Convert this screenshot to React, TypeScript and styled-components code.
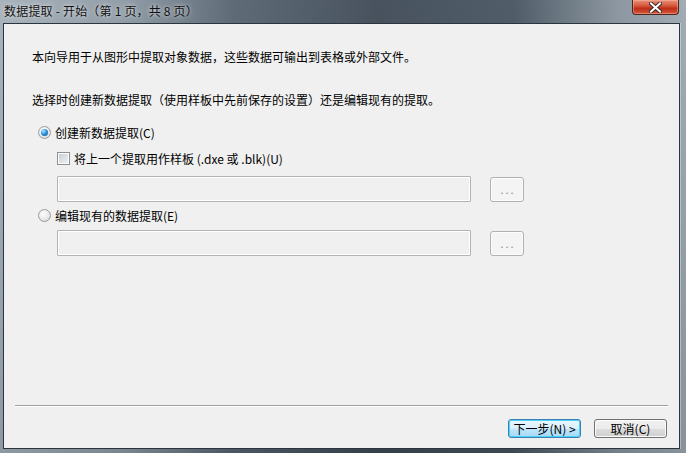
import React from "react";
import styled, { createGlobalStyle } from "styled-components";

const GlobalStyle = createGlobalStyle`
  html, body {
    margin: 0;
    padding: 0;
    background: #4c5a68;
  }
  body {
    font-family: "Noto Sans CJK SC", "Liberation Sans", sans-serif;
    font-size: 12px;
    color: #000;
  }
`;

// styled
const Window = styled.div`
  width: 686px;
  height: 453px;
  box-sizing: border-box;
  display: flex;
  flex-direction: column;
  padding: 0 6px 4px 3px;
  background:
    linear-gradient(to bottom, rgba(255, 255, 255, 0.06), rgba(0, 0, 0, 0.12)),
    linear-gradient(
      to right,
      #a3aeb7 0%,
      #8b98a3 18%,
      #55626f 34%,
      #3c4854 55%,
      #46535f 75%,
      #85919c 90%,
      #9ca7b0 100%
    );
`;

const TitleBar = styled.div`
  height: 23px;
  flex-shrink: 0;
  display: flex;
  align-items: flex-start;
  justify-content: space-between;
`;

const Title = styled.div`
  margin: 3px 0 0 1px;
  font-size: 12px;
  line-height: 16px;
  color: #111;
  text-shadow: 0 0 6px rgba(255, 255, 255, 0.6), 0 0 3px rgba(255, 255, 255, 0.5);
  letter-spacing: 0.2px;
`;

const CloseButton = styled.div`
  width: 47px;
  height: 15px;
  box-sizing: border-box;
  margin-right: 1px;
  border: 1px solid #4a2620;
  border-top: none;
  border-radius: 0 0 4px 4px;
  background: linear-gradient(to bottom, #e8927a 0%, #d65a3e 40%, #bd2f18 60%, #d4583a 100%);
  box-shadow: inset 0 0 0 1px rgba(255, 190, 170, 0.45);
  display: flex;
  align-items: center;
  justify-content: center;
`;

const Client = styled.div`
  flex: 1;
  display: flex;
  flex-direction: column;
  background: #f0f0f0;
  border: 1px solid #2a3540;
  box-shadow: 1px 0 0 rgba(255, 255, 255, 0.35);
`;

const Body = styled.div`
  display: flex;
  flex-direction: column;
  padding: 25px 0 0 28px;
`;

const Para = styled.p<{ $gap?: number }>`
  margin: ${(p) => p.$gap ?? 0}px 0 0 0;
  line-height: 16px;
  white-space: nowrap;
`;

const OptionRow = styled.label<{ $indent: number; $gap: number }>`
  display: flex;
  align-items: center;
  height: 16px;
  margin: ${(p) => p.$gap}px 0 0 ${(p) => p.$indent}px;
  gap: 4px;
  white-space: nowrap;
`;

const Radio = styled.span<{ $checked?: boolean }>`
  width: 13px;
  height: 13px;
  box-sizing: border-box;
  border-radius: 50%;
  border: 1px solid #9a9c9e;
  background: radial-gradient(circle at 40% 35%, #ffffff 0%, #e6e6e6 60%, #cfcfcf 100%);
  display: flex;
  align-items: center;
  justify-content: center;

  &::after {
    content: "";
    display: ${(p) => (p.$checked ? "block" : "none")};
    width: 7px;
    height: 7px;
    border-radius: 50%;
    background: radial-gradient(circle at 35% 30%, #a9e4ff 0%, #2b8fd8 50%, #0b4c8c 100%);
  }
`;

const Checkbox = styled.span`
  width: 13px;
  height: 13px;
  box-sizing: border-box;
  border: 1px solid #8e8f8f;
  background: #fff;
  display: flex;
  align-items: center;
  justify-content: center;

  &::after {
    content: "";
    width: 9px;
    height: 9px;
    background: linear-gradient(135deg, #cbcfd5 0%, #eef0f2 100%);
  }
`;

const FieldRow = styled.div<{ $gap: number }>`
  display: flex;
  align-items: center;
  margin: ${(p) => p.$gap}px 0 0 25px;
  gap: 19px;
`;

const TextField = styled.div`
  width: 414px;
  height: 26px;
  box-sizing: border-box;
  border: 1px solid #b4b4b4;
  border-radius: 1px;
  box-shadow: inset 0 0 0 1px #ffffff;
  background: #f0f0f0;
`;

const BrowseButton = styled.div`
  width: 34px;
  height: 25px;
  box-sizing: border-box;
  border: 1px solid #adb2b5;
  border-radius: 3px;
  background: #f4f4f4;
  box-shadow: inset 0 0 0 1px #fcfcfc;
  color: #8d8d8d;
  font-size: 11px;
  line-height: 23px;
  text-align: center;
  letter-spacing: 2px;
  padding-left: 2px;
`;

const Footer = styled.div`
  margin-top: auto;
  display: flex;
  flex-direction: column;
  padding: 0 11px 10px 11px;
`;

const Separator = styled.div`
  height: 1px;
  background: #a0a0a0;
  border-bottom: 1px solid #ffffff;
`;

const ButtonRow = styled.div`
  display: flex;
  justify-content: flex-end;
  gap: 13px;
  margin-top: 12px;
  padding-right: 1px;
`;

const DialogButton = styled.div<{ $primary?: boolean }>`
  width: 73px;
  height: 19px;
  box-sizing: border-box;
  border-radius: 3px;
  border: 1px solid ${(p) => (p.$primary ? "#3c7fb1" : "#707070")};
  background: ${(p) =>
    p.$primary
      ? "linear-gradient(to bottom, #eaf6fd 0%, #d9f0fc 50%, #bee6fd 51%, #a7d9f5 100%)"
      : "linear-gradient(to bottom, #f2f2f2 0%, #ebebeb 50%, #dddddd 51%, #cfcfcf 100%)"};
  box-shadow: inset 0 0 0 1px ${(p) => (p.$primary ? "#48d3fb" : "#fcfcfc")};
  font-size: 12px;
  line-height: 17px;
  text-align: center;
  white-space: nowrap;
`;

function CloseGlyph() {
  return (
    <svg width="13" height="11" viewBox="0 0 13 11">
      <path
        d="M2 1.5 L11 9.5 M11 1.5 L2 9.5"
        stroke="#3b2a2a"
        strokeWidth="4"
        strokeLinecap="square"
      />
      <path
        d="M2 1.5 L11 9.5 M11 1.5 L2 9.5"
        stroke="#ffffff"
        strokeWidth="2"
        strokeLinecap="square"
      />
    </svg>
  );
}

function App() {
  return (
    <>
      <GlobalStyle />
      <Window>
        <TitleBar>
          <Title>数据提取 - 开始（第 1 页，共 8 页）</Title>
          <CloseButton>
            <CloseGlyph />
          </CloseButton>
        </TitleBar>
        <Client>
          <Body>
            <Para>本向导用于从图形中提取对象数据，这些数据可输出到表格或外部文件。</Para>
            <Para $gap={27}>选择时创建新数据提取（使用样板中先前保存的设置）还是编辑现有的提取。</Para>

            <OptionRow $indent={6} $gap={16}>
              <Radio $checked />
              创建新数据提取(C)
            </OptionRow>
            <OptionRow $indent={25} $gap={10}>
              <Checkbox />
              将上一个提取用作样板 (.dxe 或 .blk)(U)
            </OptionRow>
            <FieldRow $gap={10}>
              <TextField />
              <BrowseButton>...</BrowseButton>
            </FieldRow>

            <OptionRow $indent={6} $gap={5}>
              <Radio />
              编辑现有的数据提取(E)
            </OptionRow>
            <FieldRow $gap={7}>
              <TextField />
              <BrowseButton>...</BrowseButton>
            </FieldRow>
          </Body>

          <Footer>
            <Separator />
            <ButtonRow>
              <DialogButton $primary>下一步(N) &gt;</DialogButton>
              <DialogButton>取消(C)</DialogButton>
            </ButtonRow>
          </Footer>
        </Client>
      </Window>
    </>
  );
}

export default App;
